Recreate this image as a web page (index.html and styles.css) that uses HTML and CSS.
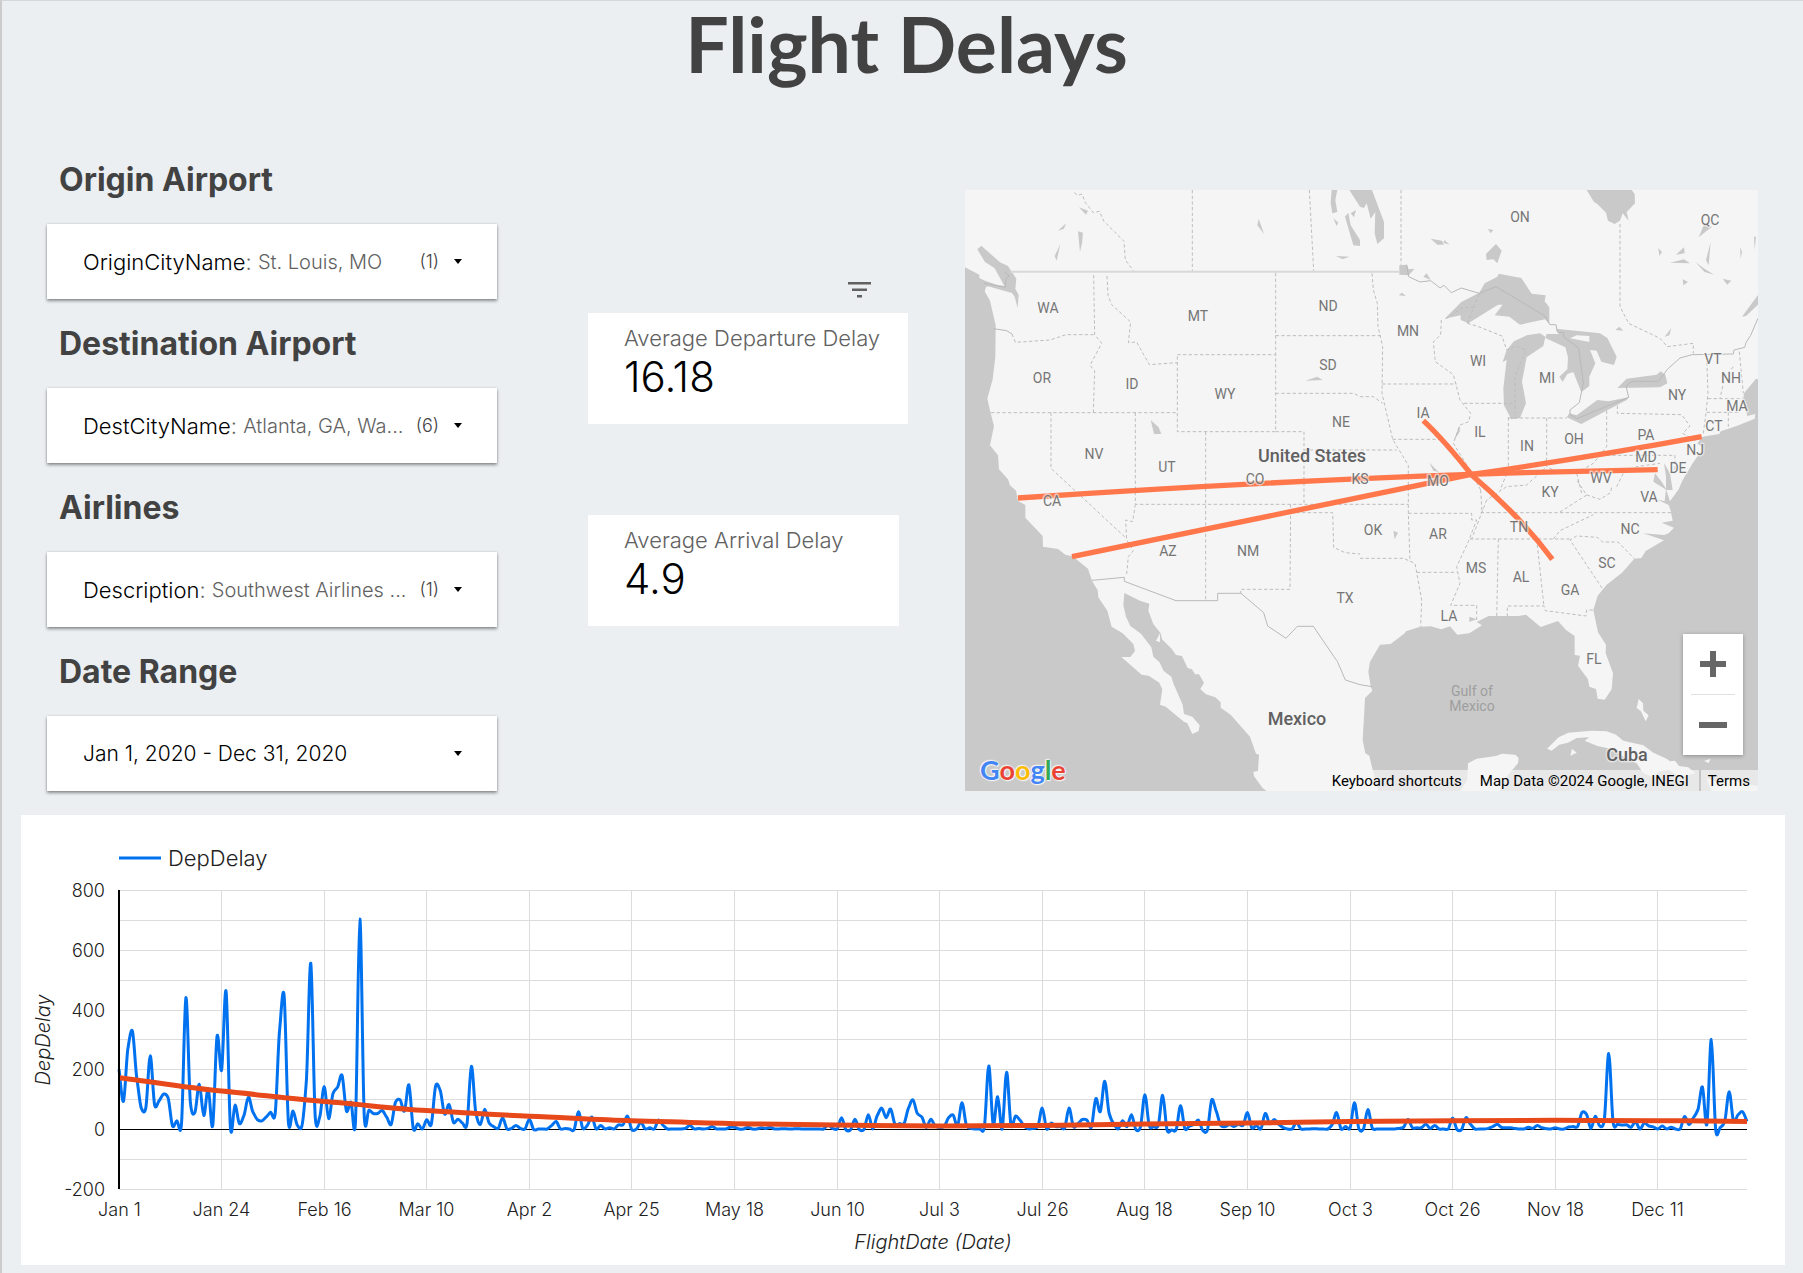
FILE: index.html
```html
<!DOCTYPE html>
<html lang="en">
<head>
<meta charset="utf-8">
<title>Flight Delays</title>
<meta name="viewport" content="width=device-width, initial-scale=1">
<link rel="stylesheet" href="styles.css">
</head>
<body>
<div class="report">
  <header class="report-header">
    <h1>Flight Delays</h1>
  </header>

  <main>
    <div class="dashboard">
      <section class="filters" aria-label="Filters">
        <div class="filter">
          <h2>Origin Airport</h2>
          <div class="control">
            <label for="origin">OriginCityName<span class="colon">: </span></label>
            <select id="origin"><option>St. Louis, MO</option></select>
            <span class="count">(1)</span>
            <svg class="caret" viewBox="0 0 10 6" aria-hidden="true"><path d="M0 0h10L5 6z"/></svg>
          </div>
        </div>
        <div class="filter">
          <h2>Destination Airport</h2>
          <div class="control">
            <label for="dest">DestCityName<span class="colon">: </span></label>
            <select id="dest"><option>Atlanta, GA, Wa...</option></select>
            <span class="count">(6)</span>
            <svg class="caret" viewBox="0 0 10 6" aria-hidden="true"><path d="M0 0h10L5 6z"/></svg>
          </div>
        </div>
        <div class="filter">
          <h2>Airlines</h2>
          <div class="control">
            <label for="airline">Description<span class="colon">: </span></label>
            <select id="airline"><option>Southwest Airlines ...</option></select>
            <span class="count">(1)</span>
            <svg class="caret" viewBox="0 0 10 6" aria-hidden="true"><path d="M0 0h10L5 6z"/></svg>
          </div>
        </div>
        <div class="filter">
          <h2 id="range-title">Date Range</h2>
          <div class="control">
            <select class="range" aria-labelledby="range-title"><option>Jan 1, 2020 - Dec 31, 2020</option></select>
            <svg class="caret" viewBox="0 0 10 6" aria-hidden="true"><path d="M0 0h10L5 6z"/></svg>
          </div>
        </div>
      </section>

      <section class="scorecards" aria-label="Averages">
        <button class="filter-button" type="button" aria-label="Filters on this chart">
          <svg viewBox="0 0 24 18" aria-hidden="true"><path d="M0 0h23v2.500H0zM4 6.500h15V9H4zM9 13h5v2.500H9z"/></svg>
        </button>
        <div class="scorecard">
          <div class="metric">Average Departure Delay</div>
          <div class="value">16.18</div>
        </div>
        <div class="scorecard narrow">
          <div class="metric">Average Arrival Delay</div>
          <div class="value">4.9</div>
        </div>
      </section>

      <section class="map" aria-label="Route map">
        <svg class="map-canvas" viewBox="0 0 793 601" role="img" aria-label="Routes from St. Louis">
          <rect class="land" width="793" height="601"/>
          <g transform="translate(-5 -10) scale(.33333)">
            <g class="water">
              <path d="M15 262L58 284 58 294 75 302 110 314 78 320 74 334 90 362 107 436 106 530 98 598 82 656 92 700 102 738 90 796 114 826 117 868 144 898 150 916 168 932 174 963 196 975 196 1013 248 1068 249 1100 294 1107 316 1124 338 1129 384 1166 396 1202 413 1231 415 1252 442 1292 455 1340 488 1360 520 1392 525 1413 511 1431 484 1431 545 1484 566 1487 598 1508 607 1528 600 1574 617 1580 672 1625 682 1630 697 1662 716 1653 719 1636 697 1610 672 1602 668 1574 640 1510 634 1490 611 1473 598 1446 580 1430 574 1402 543 1361 511 1338 498 1310 490 1275 493 1239 540 1262 568 1271 565 1292 580 1332 602 1360 606 1378 635 1406 648 1425 666 1428 683 1464 696 1468 705 1483 717 1483 732 1508 721 1527 738 1543 766 1552 782 1567 782 1583 812 1604 870 1670 888 1721 897 1724 894 1773 880 1775 882 1788 907 1823 928 1840 15 1840Z"/>
              <path d="M64 197L120 247 144 258 169 296 166 326 176 345 173 384 164 350 156 339 110 326 75 316 72 308 133 318 104 265 75 246 52 208Z"/>
              <path d="M1115 30h17l-6 30 6 36-15 4-5-30zM1165 98l7 38 28 44v18l-20-2-25-86zM1120 114l15 14-5 10zM1188 90l-6 22-10-12zM1128 228l40 2-20 8zM896 116l16 46-20-26zM357 82l27 10-6 12zM318 130l-6 16-18 6zM354 154l15 4-3 32-6 26zM301 192l-11 50-6-14zM572 720l24 22 8 20h-22zM1036 602l36-12 16 10z"/>
              <g transform="translate(1200 0)">
                <path d="M-32 30H36L72 126V175L52 192 44 160 46 96 32 116 20 70 12 84 0 80Z"/>
                <path d="M254 416L304 366 358 338 374 310 412 290 416 281 484 294 515 341 557 346 554 364 568 382 568 432 555 418 480 434 448 410 404 406 428 374 414 374 325 430 302 420 302 406Z"/>
                <path d="M540 460L556 470 550 498 500 532 486 605 498 670 480 714 454 718 432 676 430 625 440 540 428 546 440 510 462 484 500 466Z"/>
                <path d="M560 462L596 462 588 446 720 460 742 474 770 530 762 555 724 545 710 512 690 510 706 550 688 590 688 618 664 637 640 576 622 582 608 606 598 590 622 568 624 532 616 502 556 474Z"/>
                <path d="M620 712L628 700 650 706 712 660 745 664 806 652 800 660 736 694 664 732ZM772 624L800 596 890 584 902 574 916 584 922 610 900 622Z"/>
                <path d="M680 30L702 66 712 72 738 98 744 122 764 132 780 122 788 100 806 122 800 96 825 70 824 42 815 30ZM408 192L425 212 412 250 400 238 380 240 378 222Z"/>
                <path d="M212 176L246 182 252 194 232 194ZM254 180L268 194 250 188ZM384 147L400 150 392 160ZM118 256L140 254 146 268 164 266 146 286 118 284ZM190 290L200 280 212 300ZM116 346L126 338 138 348ZM1016 172L1032 134 1056 140ZM895 204L906 216 898 228ZM948 224L972 202 974 220ZM930 248L972 238 990 250ZM1052 186L1046 256 1038 240ZM1140 202L1146 216 1142 236ZM1182 170L1188 170 1184 210ZM1006 246L1030 264 1062 284 1034 276ZM1088 296L1114 302 1102 314ZM968 298L984 306 970 316ZM1194 345V374L1158 408 1146 410ZM934 444L928 466 914 470ZM766 450L778 440 790 452ZM280 785L298 736 300 754ZM208 848L236 876 220 872ZM912 850L930 880 938 930 918 930 918 890ZM885 880L905 905 920 930 880 905Z"/>
              </g>
              <g transform="translate(1200 930)">
                <path d="M60 920L36 832 28 797 16 790 8 750 12 680 15 624 37 602 32 588 25 545 30 515 60 464 92 462 134 430 138 424 180 410 212 409 244 418 270 409 292 434 328 430 366 406 350 396 386 378 475 378 498 374 542 411 594 393 618 420 644 438 644 495 660 497 654 527 684 568 688 590 708 597 713 626 734 629 755 598 759 550 737 490 738 464 714 427 700 360 713 317 740 284 786 248 823 206 844 204 857 183 912 151 850 130 912 135 926 130 942 113 905 98 938 92 932 62 926 45 890 28 914 34 918 -2 930 34 956 -2 968 -30 998 -80 1030 -125 1012 -140 1028 -160 1078 -168 1082 -176 1130 -192 1184 -214 1186 -228 1162 -222 1150 -275 1152 -290 1188 -334 1200 -330V920Z"/>
                <path d="M100 122L114 128 104 148ZM328 380L350 388 328 396Z"/>
              </g>
            </g>
            <path class="land" d="M600 1360l-12 22 12 5zM1830 475l20-9 38 2v18z"/>
            <g class="land" transform="translate(1200 930)">
              <path d="M290 920L322 870 324 820 350 806 408 798 426 791 466 794 476 804 474 820 440 860 410 920Z"/>
              <path d="M561 776L596 742 625 728 695 722 740 724 768 734 790 752 850 766 880 788 920 806 930 814 945 812 957 828 985 832 1006 850 975 858 950 855 925 840 895 845 880 862 850 850 830 820 800 805 745 775 712 768 674 752 688 742 650 744 624 758 598 764 575 782Z"/>
              <path d="M636 776L650 788 631 797ZM836 627L849 640 850 662 866 676 857 694 843 664 830 654ZM1032 813L1052 806 1046 819ZM1040 865L1070 875 1110 870 1200 890V920H1060Z"/>
            </g>
            <path class="parallel" d="M150 275H1320"/>
            <g class="border">
              <path d="M72 310L136 322 138 296 148 288 134 276M100 446L140 452 156 462M396 1201L493 1192 493 1204 648 1262H773V1240H843L911 1298 923 1338 978 1375 1012 1339H1060L1122 1430 1132 1444 1156 1500 1200 1514 1237 1520"/>
              <path transform="translate(1200 0)" d="M140 254L146 290 180 306 212 302 240 324 252 316 274 338 304 324 344 336 358 340 408 320 555 408 570 434 588 434 592 456 610 458 612 472 656 504 670 610 658 668 630 690 630 704 650 716 806 652 798 618 816 604 896 604 922 568 960 534 996 524 1120 522 1122 510 1154 502 1158 488 1172 466 1194 415"/>
            </g>
            <g class="state-line">
              <path d="M343 38L352 46 366 42 376 68 400 98 418 94 432 124 492 184 496 240 520 272M697 30V272M1048 30L1061 272M401 285L404 464 425 490 390 556 404 572 400 698M156 462L166 487 270 480 318 464H404M441 288L444 346 455 374 512 426 505 488 530 486 568 554 652 548M652 524H947V755H652ZM947 279V524M947 467H1262M947 640H1182L1200 650M93 698H652M273 698V865L500 1076M526 698V973H1345M526 973L518 1025 497 1020 500 1080 520 1112 505 1130 500 1182M737 755V1260M947 755H1032V972M1032 810H1310M992 973L990 1228H842V1240M992 998H1118L1121 1102 1155 1118 1200 1122"/>
              <path transform="translate(1200 0)" d="M123 30V254M36 280L40 330 52 370 54 440 68 500 66 640 98 778 145 856V1000L150 1145M0 650H40L68 670M66 612H290M98 778H245M244 420L242 464 220 486 226 545 280 584 300 660 332 700 326 725 300 735 280 790 330 870 362 930M312 670H465M445 712V870L420 930M445 714H620M560 714V860L500 915 440 920 380 960M740 692V800L700 850 650 880 600 880 560 860M740 826H945V880M772 660V700L965 704 990 738 968 760 1012 785M1040 530L1044 640 1038 700 1030 760M1044 656H1150M1040 697H1140M1105 697V740M1138 515L1150 640M1120 560L1095 590 1080 655M780 132V380L806 430 900 475 922 500 1000 490V520M322 430L350 438 426 468 440 510 468 498 498 510 465 590V700M258 416L310 382H348M322 430L358 340M650 880L665 940M770 920L790 880 830 860 900 850"/>
              <path transform="translate(1200 930)" d="M0 205H130L165 220 170 247 185 330 182 410M145 70H335V90H350L325 155 290 230 300 280 272 346H350V390M170 247H290M362 68H940M330 147H630M380 30L335 147M415 147L410 388M530 147L552 350M442 380V348H552L556 362 678 378 680 360H704M726 294L630 150 650 138 712 142 728 156H774L823 206M580 147L600 122 700 74M362 0L366 66M600 66L680 15 650 -30M680 15L720 28 752 8 755 -10"/>
            </g>
            <g class="route">
              <path d="M174 954Q900 905 1530 883L1640 879 2093 869"/>
              <path d="M336 1130L1530 884Q1890 832 2225 770"/>
              <path d="M1390 722Q1450 778 1535 885Q1680 1008 1777 1138"/>
            </g>
          </g>
          <g class="state">
            <text x="83" y="123">WA</text><text x="233" y="131">MT</text><text x="363" y="121">ND</text><text x="77" y="193">OR</text><text x="167" y="199">ID</text><text x="260" y="209">WY</text><text x="363" y="180">SD</text><text x="376" y="237">NE</text><text x="129" y="269">NV</text><text x="202" y="282">UT</text><text x="290" y="294">CO</text><text x="395" y="294">KS</text>
            <text x="555" y="32">ON</text><text x="745" y="35">QC</text><text x="443" y="146">MN</text><text x="513" y="176">WI</text><text x="582" y="193">MI</text><text x="458" y="228">IA</text><text x="515" y="247">IL</text><text x="562" y="261">IN</text><text x="609" y="254">OH</text><text x="681" y="250">PA</text><text x="712" y="210">NY</text><text x="748" y="174">VT</text><text x="766" y="193">NH</text><text x="772" y="221">MA</text><text x="749" y="241">CT</text><text x="730" y="265">NJ</text><text x="681" y="272">MD</text><text x="713" y="283">DE</text><text x="636" y="293">WV</text><text x="473" y="296">MO</text><text x="585" y="307">KY</text>
            <text x="87" y="316">CA</text><text x="203" y="366">AZ</text><text x="283" y="366">NM</text><text x="380" y="413">TX</text><text x="408" y="345">OK</text><text x="473" y="349">AR</text><text x="511" y="383">MS</text><text x="556" y="392">AL</text><text x="605" y="405">GA</text><text x="642" y="378">SC</text><text x="665" y="344">NC</text><text x="684" y="312">VA</text><text x="554" y="342">TN</text><text x="484" y="431">LA</text><text x="629" y="474">FL</text>
          </g>
          <g class="sea"><text x="507" y="506">Gulf of</text><text x="507" y="521">Mexico</text></g>
          <g class="country"><text x="347" y="272">United States</text><text x="332" y="535">Mexico</text><text x="662" y="571">Cuba</text></g>
        </svg>
        <a class="google" href="#" aria-label="Google"><span class="g-blue">G</span><span class="g-red">o</span><span class="g-yellow">o</span><span class="g-blue">g</span><span class="g-green">l</span><span class="g-red">e</span></a>
        <div class="zoom">
          <button type="button" aria-label="Zoom in"><svg viewBox="0 0 28 28" aria-hidden="true"><path d="M11 1h6v10h10v6H17v10h-6V17H1v-6h10z"/></svg></button>
          <button type="button" aria-label="Zoom out"><svg viewBox="0 0 28 28" aria-hidden="true"><path d="M0 11h28v6H0z"/></svg></button>
        </div>
        <div class="attribution">
          <button type="button">Keyboard shortcuts</button>
          <span>Map Data ©2024 Google, INEGI</span>
          <a href="#">Terms</a>
        </div>
      </section>
    </div>

    <section class="chart-card" aria-label="Departure delay by flight date">
      <svg id="chart" viewBox="0 0 1764 450" role="img" aria-label="DepDelay by FlightDate">
        <path class="legend-line" d="M98 43h42"/>
        <text class="legend" x="147" y="51">DepDelay</text>
        <g id="grid"></g>
        <path class="axis" d="M98 314.500H1726"/>
        <path class="series" id="delay"/>
        <path class="trend" id="trend"/>
        <path class="axis value-axis" d="M98 75V374"/>
        <text class="axis-title" x="912" y="434">FlightDate (Date)</text>
        <text class="axis-title" transform="translate(29 225) rotate(-90)">DepDelay</text>
      </svg>
    </section>
  </main>
</div>
<script src="chart.js"></script>
</body>
</html>
```
FILE: styles.css
```css
* { box-sizing: border-box; }

body {
  margin: 0;
  background: #ebeff2;
  color: #000;
  font-family: Inter, "Liberation Sans", sans-serif;
  font-weight: 300;
}

h1, h2 { margin: 0; color: #424242; font-weight: 700; }

button { border: 0; padding: 0; background: none; font: inherit; color: inherit; cursor: pointer; }

.report {
  border-top: 1px solid #d5d8da;
  border-left: 2px solid #ccc;
  padding-bottom: 8px;
}

.report-header {
  height: 159px;
  padding-left: 8px;
  text-align: center;
}

h1 {
  font-family: Lato, sans-serif;
  font-size: 77px;
  line-height: 84px;
}

.dashboard {
  display: grid;
  grid-template-columns: 484px 320px minmax(0, 1fr);
  column-gap: 57px;
  padding: 0 45px;
}

.filters { display: grid; gap: 25px; align-content: start; width: 450px; }

h2 {
  padding-left: 12px;
  margin-bottom: 24px;
  font-size: 32px;
  line-height: 40px;
}

.control {
  display: flex;
  align-items: center;
  height: 75px;
  padding: 0 35px 0 36px;
  background: #fff;
  box-shadow: 0 2px 3px rgba(0, 0, 0, .4), 0 0 2px rgba(0, 0, 0, .15);
  font-size: 22px;
}

.colon { white-space: pre; color: #616161; }

.control select {
  flex: 1;
  min-width: 0;
  border: 0;
  padding: 0;
  appearance: none;
  background: none;
  color: #616161;
  font: inherit;
  font-size: 20px;
}

.control .range { color: #000; font-size: 21px; }

.count { margin-right: 15px; color: #424242; font-size: 18px; }

.caret { width: 8px; height: 5px; }

.scorecards {
  display: flex;
  flex-direction: column;
  padding-top: 118px;
}

.filter-button { align-self: flex-end; width: 24px; height: 26px; margin: 0 36px 9px 0; }
.filter-button svg { display: block; width: 24px; height: 18px; fill: #616161; }

.scorecard {
  height: 111px;
  padding: 10px 12px 0 36px;
  background: #fff;
  white-space: nowrap;
}

.scorecard.narrow { margin: 91px 9px 0 0; }

.metric { color: #616161; font-size: 22px; line-height: 30px; }

.value { font-size: 42px; line-height: 48px; }

.map { position: relative; align-self: start; margin-top: 30px; overflow: hidden; }

.map-canvas { display: block; width: 100%; height: auto; font-family: Roboto, sans-serif; text-anchor: middle; }

.land { fill: #f5f5f5; }
.water { fill: #c9c9c9; }
.parallel { fill: none; stroke: #d8d8d8; stroke-width: 6; }
.border { fill: none; stroke: #b9b9b9; stroke-width: 3; }
.state-line { fill: none; stroke: #bdbdbd; stroke-width: 3; stroke-dasharray: 10 7; }
.route { fill: none; stroke: #ff774b; stroke-width: 16; stroke-linejoin: round; }

.map-canvas text { paint-order: stroke; stroke: #f5f5f5; stroke-width: 3px; stroke-opacity: .6; stroke-linejoin: round; }
.state { fill: #757575; font-size: 14px; font-weight: 400; }
.map-canvas .sea text { stroke: none; fill: #9e9e9e; font-size: 14px; font-weight: 400; }
.country { fill: #616161; font-size: 18px; font-weight: 500; }

.google {
  position: absolute;
  left: 15px;
  bottom: 4px;
  font-family: Lato, sans-serif;
  font-size: 27px;
  line-height: 34px;
  font-weight: 700;
  text-decoration: none;
  text-shadow: 0 0 2px #fff, 0 0 2px #fff, 1px 1px 1px #eee, -1px -1px 1px #eee;
}

.g-blue { color: #4285f4; }
.g-red { color: #ea4335; }
.g-yellow { color: #fbbc05; }
.g-green { color: #34a853; }

.zoom {
  position: absolute;
  right: 15px;
  bottom: 36px;
  width: 60px;
  background: #fff;
  box-shadow: 0 1px 4px rgba(0, 0, 0, .3);
}

.zoom button { display: grid; place-items: center; width: 60px; height: 60px; }
.zoom button + button { position: relative; height: 61px; }
.zoom button + button::before { content: ""; position: absolute; top: 0; left: 8px; right: 8px; height: 1px; background: #e0e0e0; }
.zoom svg { width: 28px; height: 28px; fill: #666; }

.attribution {
  position: absolute;
  right: 0;
  bottom: 0;
  display: flex;
  height: 21px;
  padding: 0 8px 0 10px;
  background: rgba(245, 245, 245, .7);
  font: 400 15px/22px Roboto, sans-serif;
}

.attribution span { padding: 0 10px 0 18px; border-right: 2px solid #c4c4c4; }
.attribution a { padding-left: 7px; color: inherit; text-decoration: none; }

.chart-card { margin: 24px 18px 0 19px; background: #fff; }
.chart-card svg { display: block; width: 100%; height: auto; }
.chart-card text { fill: #212121; font-size: 18px; }
.chart-card .legend { font-size: 22px; }
.chart-card .axis-title { font-size: 20px; font-style: italic; text-anchor: middle; }
.tick-x { text-anchor: middle; }
.tick-y { text-anchor: end; }
.gridline { stroke: #dcdcdc; }
.axis { fill: none; stroke: #000; }
.value-axis { stroke-width: 2; }
.legend-line { stroke: #0072f0; stroke-width: 3; }
.series { fill: none; stroke: #0072f0; stroke-width: 3; stroke-linejoin: round; }
.trend { fill: none; stroke: #e8491b; stroke-width: 5; }
```
FILE: chart.js
```js
// Departure delay in minutes, one value per day of 2020
const delays = [
  200,93,270,328,170,70,70,245,80,95,117,105,10,28,15,440,90,55,150,45,135,10,312,197,462,0,80,18,45,107,58,
  32,27,40,56,50,330,450,20,60,12,10,160,555,40,40,142,35,120,140,180,60,90,20,703,40,63,52,52,62,
  40,15,90,98,60,148,0,18,0,31,15,145,130,50,82,22,33,20,15,210,55,15,66,20,8,2,38,0,2,12,2,
  0,33,-2,0,0,0,12,25,0,2,0,-3,58,2,12,40,0,12,0,4,0,14,14,43,-3,0,22,0,4,0,
  30,12,0,0,0,0,2,12,0,2,0,2,8,0,0,0,6,6,0,0,6,0,0,4,2,6,0,0,1,0,0,
  1,0,0,0,0,0,0,14,2,0,38,-3,-3,33,-2,-2,48,0,45,70,38,67,15,18,18,70,98,52,40,5,
  33,10,5,8,38,47,10,88,12,2,0,0,5,211,15,108,0,190,12,43,30,8,0,2,8,70,0,20,8,8,3,
  70,8,18,32,30,6,102,58,160,52,18,0,28,8,48,-2,6,115,10,8,12,113,-5,-3,-3,78,0,10,15,30,-5,
  -5,98,60,12,8,15,8,16,12,55,3,12,0,52,18,32,16,5,0,0,22,0,0,0,1,0,0,0,15,55,
  0,8,3,88,0,0,65,3,0,0,0,0,0,2,6,32,4,4,4,16,2,12,0,0,0,37,-2,-2,38,16,0,
  0,0,2,8,16,5,4,4,2,0,0,6,2,12,4,1,0,4,0,0,7,8,8,55,50,2,43,10,30,
  253,20,16,13,14,6,24,0,20,10,7,0,10,0,6,0,0,42,15,38,65,141,15,300,-5,5,25,125,25,48,58,25
];

// Polynomial trend, sampled every 23 days and at the year's end
const trend = [[0,172],[23,127],[46,92],[69,62],[92,43],[115,28],[138,18],[161,13],[184,10],
  [207,12],[230,17],[253,20],[276,25],[299,28],[322,29],[345,28],[365,25]];

const ticks = ["Jan 1","Jan 24","Feb 16","Mar 10","Apr 2","Apr 25","May 18","Jun 10",
  "Jul 3","Jul 26","Aug 18","Sep 10","Oct 3","Oct 26","Nov 18","Dec 11"];

const left = 98, right = 1726, zero = 314, perMinute = 0.2985;
const x = day => left + day * (right - left) / 365;
const y = value => zero - value * perMinute;

function smooth(points) {
  let d = `M${points[0]}`;
  for (let i = 0; i < points.length - 1; i++) {
    const p0 = points[i - 1] || points[i], p1 = points[i], p2 = points[i + 1], p3 = points[i + 2] || p2;
    d += `C${p1[0] + (p2[0] - p0[0]) / 6} ${p1[1] + (p2[1] - p0[1]) / 8} ` +
         `${p2[0] - (p3[0] - p1[0]) / 6} ${p2[1] - (p3[1] - p1[1]) / 8} ${p2[0]} ${p2[1]}`;
  }
  return d;
}

const grid = document.getElementById("grid");
let markup = "";
for (let v = -200; v <= 800; v += 100) {
  const gy = Math.round(y(v)) + 0.5;
  markup += `<path class="gridline" d="M${left} ${gy}H${right}"/>`;
  if (v % 200 === 0) markup += `<text class="tick-y" x="84" y="${gy + 6}">${v}</text>`;
}
ticks.forEach((label, i) => {
  const gx = Math.floor(x(i * 23)) + 0.5;
  markup += `<path class="gridline" d="M${gx} 75V374"/><text class="tick-x" x="${gx}" y="401">${label}</text>`;
});
grid.innerHTML = markup;

document.getElementById("delay").setAttribute("d", smooth(delays.map((v, i) => [x(i), y(v)])));
document.getElementById("trend").setAttribute("d", smooth(trend.map(([d, v]) => [x(d), y(v)])));
```
